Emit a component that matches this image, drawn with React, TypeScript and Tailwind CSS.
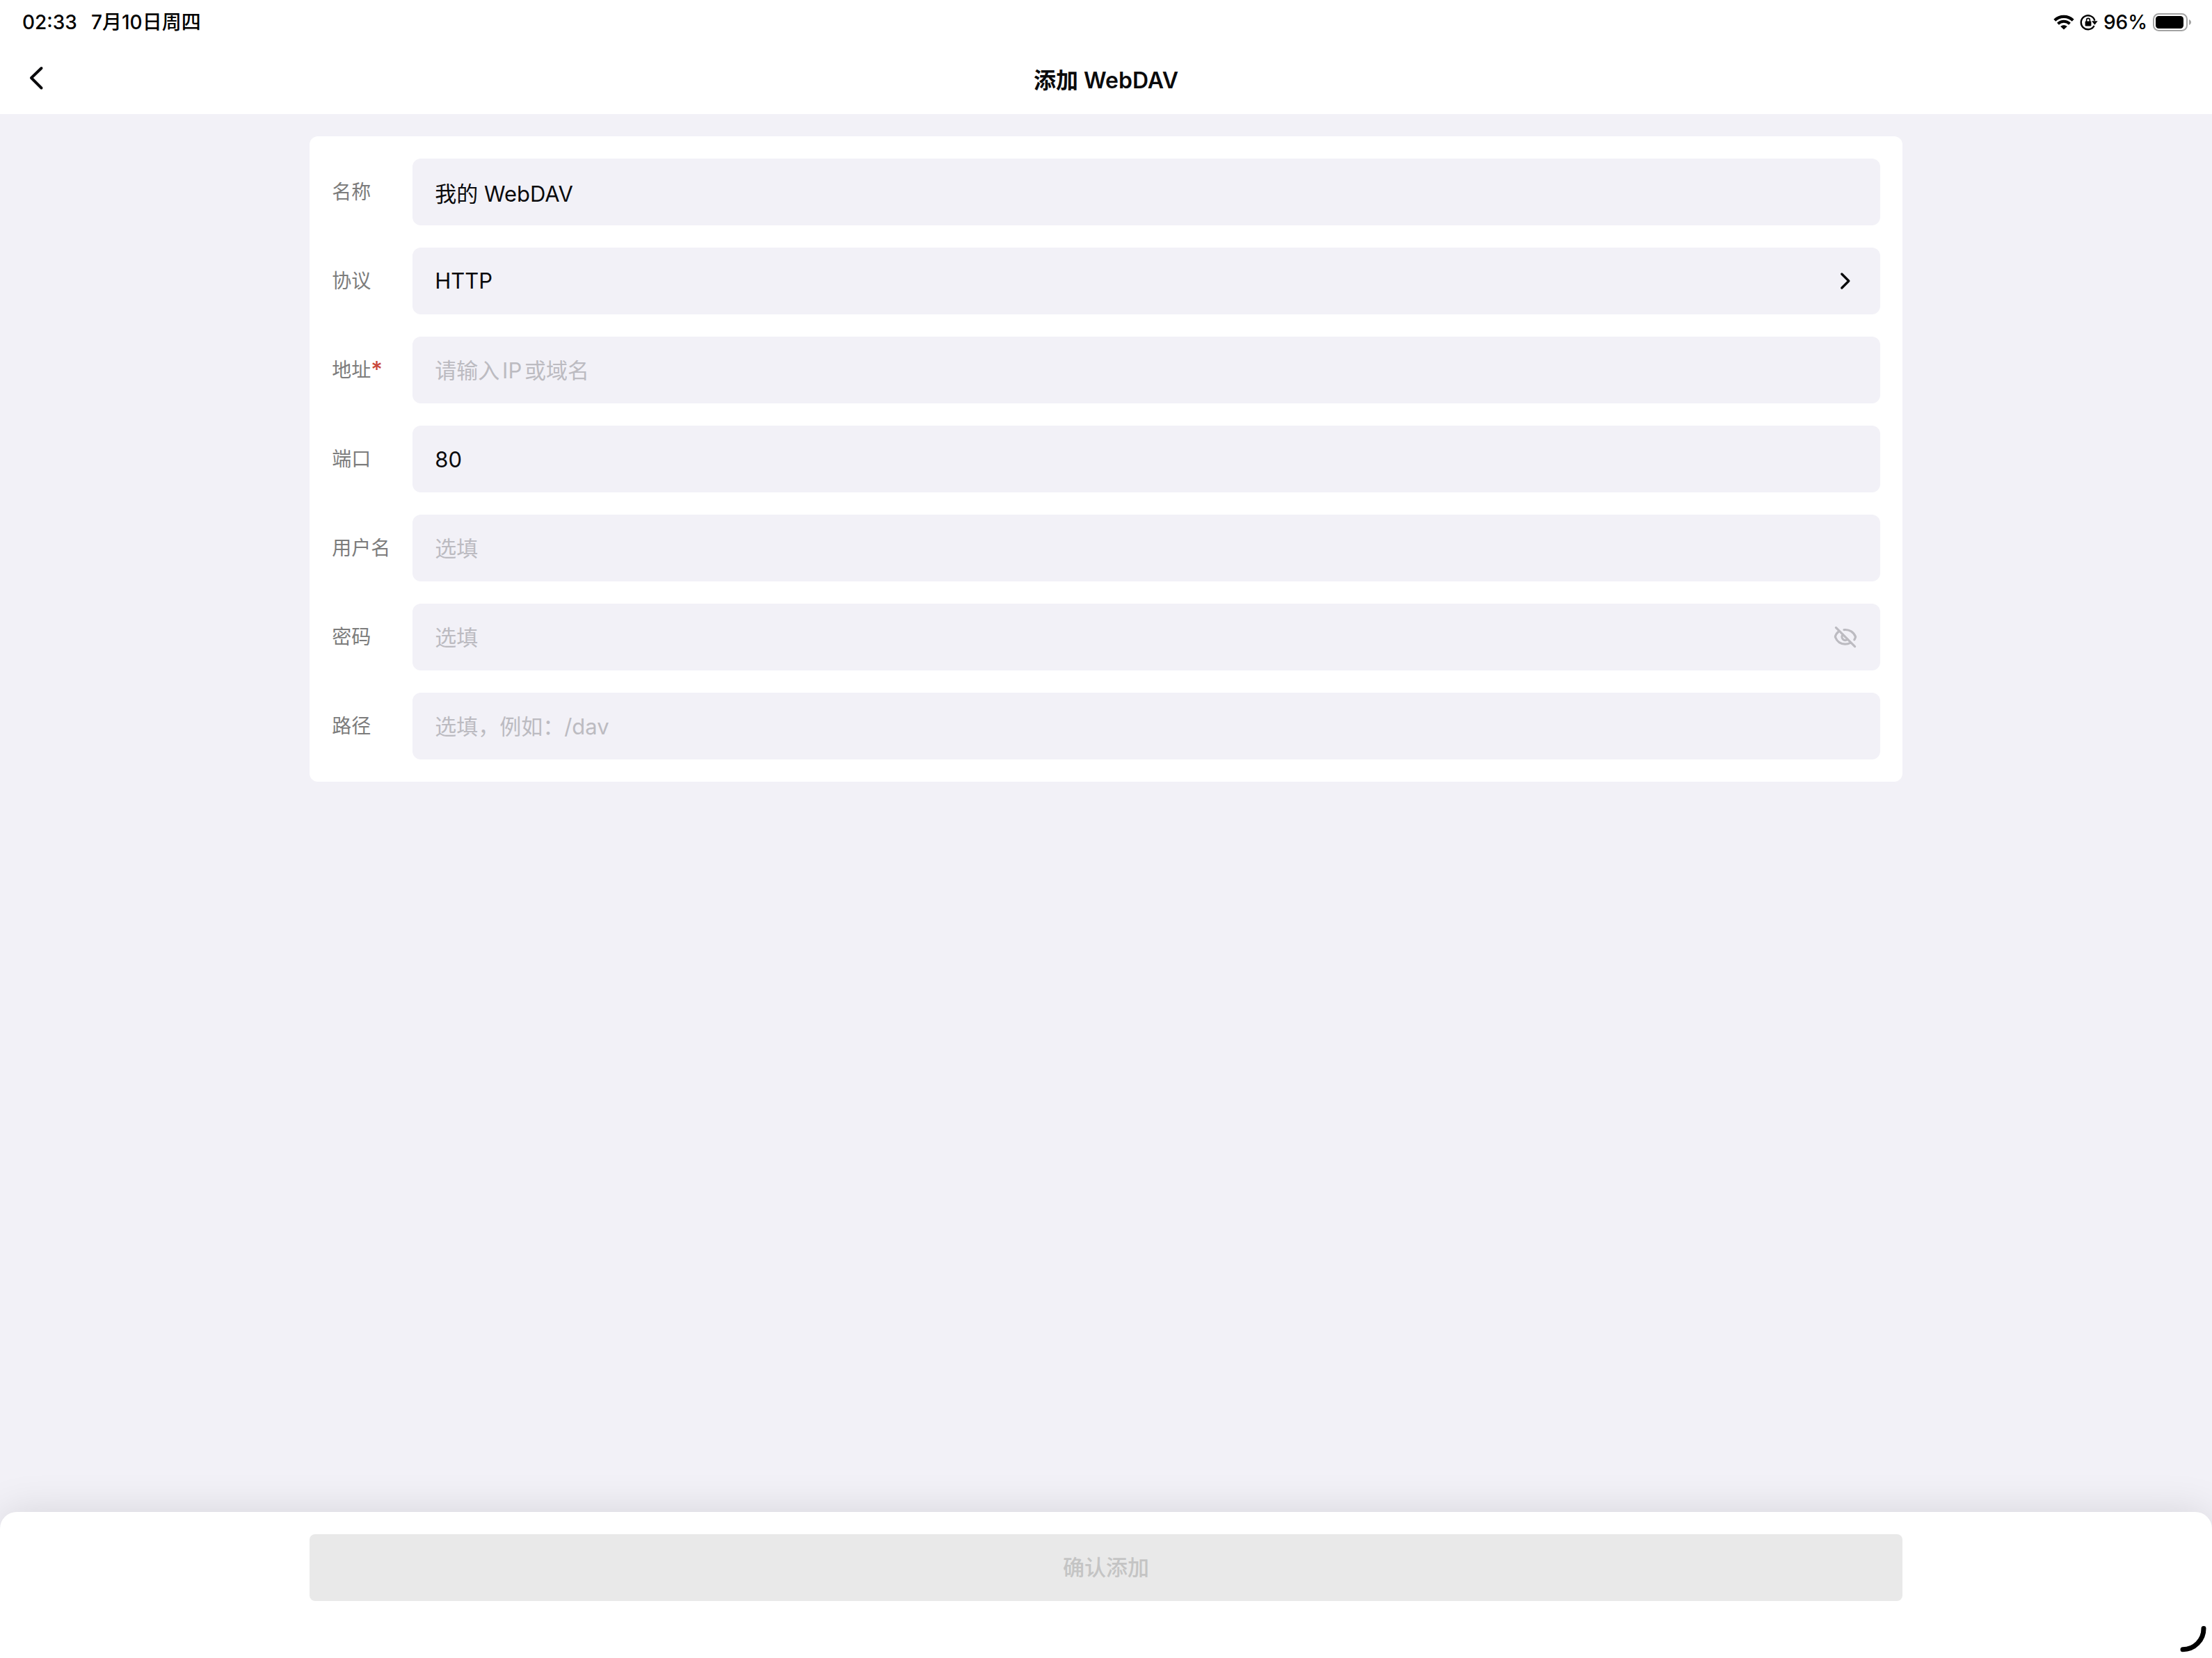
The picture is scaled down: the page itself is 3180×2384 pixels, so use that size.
import { useState } from 'react';

const FIELD =
  "h-24 w-full rounded-xl bg-[#f2f1f7] px-8 text-[31px] leading-10 text-[#0a0a0c] outline-none placeholder:text-[#bcbbc1] placeholder:opacity-100 [text-autospace:normal]";

function WifiIcon() {
  return (
    <svg width="30" height="22" viewBox="0 0 30 22" fill="none" aria-hidden="true">
      <path d="M1.8 8.2C9.2 1.2 20.8 1.2 28.200 8.2" stroke="black" strokeWidth="4.2" />
      <path d="M6.5 13.200C11.4 8.6 18.6 8.6 23.5 13.200" stroke="black" strokeWidth="4" />
      <path d="M15 21.6L10.2 17.1C13.1 14.5 16.9 14.5 19.8 17.1Z" fill="black" />
    </svg>
  );
}

function RotationLockIcon() {
  return (
    <svg width="26" height="24" viewBox="0 0 26 24" fill="none" aria-hidden="true">
      <path d="M20.6 17A10 10 0 1 1 21.4 9.6" stroke="black" strokeWidth="2.4" />
      <path d="M17 10.200H25.6L21.4 15.8Z" fill="black" />
      <rect x="7.6" y="10.4" width="8.8" height="7.2" rx="1" fill="black" />
      <path d="M9.6 11V8.8A2.4 2.4 0 0 1 14.4 8.8V11" stroke="black" strokeWidth="1.6" />
    </svg>
  );
}

function BatteryIcon() {
  return (
    <svg width="56" height="26" viewBox="0 0 56 26" fill="none" aria-hidden="true">
      <rect x="1" y="1" width="48" height="24" rx="7.5" stroke="#a3a3a3" strokeWidth="2" />
      <rect x="4" y="4" width="40" height="18" rx="4.5" fill="black" />
      <path d="M52 9C56 10.4 56 15.6 52 17Z" fill="#a3a3a3" />
    </svg>
  );
}

function EyeOffIcon() {
  return (
    <svg
      width="36"
      height="36"
      viewBox="0 0 36 36"
      fill="none"
      stroke="#bcbbc1"
      strokeWidth="3.2"
      strokeLinecap="round"
      strokeLinejoin="round"
      aria-hidden="true"
    >
      <path d="M4.4 4.4L31.6 31.6" />
      <path d="M8 10.2C5.4 12.4 3.6 15.2 3.4 18C6 24.6 11.4 28.2 17.6 28.2C20.4 28.2 22.8 27.6 25 26.4" />
      <path d="M16 7.6C24 6.8 30.2 11 32.6 17.8C32.2 19.2 31.6 20.6 30.8 21.8" />
      <path d="M14.4 14.6A4.6 4.600 0 1 0 21 21.2" />
    </svg>
  );
}

type TextRow = {
  id: string;
  label: string;
  required?: boolean;
  value?: string;
  placeholder?: string;
};

function Row({ id, label, required, children }: { id: string; label: string; required?: boolean; children: React.ReactNode }) {
  return (
    <div className="flex items-center">
      <label htmlFor={id} className="flex w-[116px] shrink-0 items-center text-[28px] leading-10 text-[#7c7c7c]">
        {label}
        {required && <span className="text-[32px] font-medium text-[#c9473a]">*</span>}
      </label>
      <div className="relative min-w-0 flex-1">{children}</div>
    </div>
  );
}

function TextField({ id, label, required, value, placeholder }: TextRow) {
  return (
    <Row id={id} label={label} required={required}>
      <input id={id} type="text" defaultValue={value} placeholder={placeholder} required={required} className={FIELD} />
    </Row>
  );
}

export default function App() {
  const [visible, setVisible] = useState(false);

  return (
    <div className="relative flex min-h-screen flex-col bg-[#f2f1f7] font-['Inter','Noto_Sans_CJK_SC',sans-serif] text-black">
      <header className="bg-white">
        <div className="flex h-16 items-center justify-between pr-[29px] pl-8 text-[28px] leading-10 font-medium">
          <div className="flex gap-5">
            <time>02:33</time>
            <span>7月10日周四</span>
          </div>
          <div className="flex items-center gap-2">
            <WifiIcon />
            <RotationLockIcon />
            <span>96%</span>
            <BatteryIcon />
          </div>
        </div>
        <div className="grid h-[100px] grid-cols-[1fr_auto_1fr] items-center px-7 pt-1">
          <button type="button" aria-label="返回" className="flex size-12 items-center justify-center">
            <svg width="48" height="48" viewBox="0 0 48 48" fill="none" aria-hidden="true">
              <path
                d="M31.5 6L17 20L31.5 34.500"
                stroke="#0a0a0c"
                strokeWidth="4"
                strokeLinecap="round"
                strokeLinejoin="round"
              />
            </svg>
          </button>
          <h1 className="text-[32px] leading-[48px] font-semibold text-[#0a0a0c]">添加 WebDAV</h1>
        </div>
      </header>

      <main className="flex-1 py-8">
        <form id="webdav" className="mx-auto flex w-[72%] flex-col gap-8 rounded-xl bg-white p-8">
          <TextField id="name" label="名称" value="我的 WebDAV" />
          <Row id="protocol" label="协议">
            <select id="protocol" defaultValue="HTTP" className={`${FIELD} appearance-none`}>
              <option>HTTP</option>
              <option>HTTPS</option>
            </select>
            <svg
              width="36"
              height="36"
              viewBox="0 0 36 36"
              fill="none"
              className="pointer-events-none absolute inset-y-0 right-8 my-auto"
              aria-hidden="true"
            >
              <path d="M12.8 8L22.8 18L12.8 28" stroke="#0a0a0c" strokeWidth="3.4" strokeLinecap="round" strokeLinejoin="round" />
            </svg>
          </Row>
          <TextField id="host" label="地址" required placeholder="请输入IP或域名" />
          <TextField id="port" label="端口" value="80" />
          <TextField id="user" label="用户名" placeholder="选填" />
          <Row id="password" label="密码">
            <input id="password" type={visible ? 'text' : 'password'} placeholder="选填" className={FIELD} />
            <button
              type="button"
              aria-label="显示密码"
              onClick={() => setVisible(!visible)}
              className="absolute inset-y-0 right-8 my-auto size-9"
            >
              <EyeOffIcon />
            </button>
          </Row>
          <TextField id="path" label="路径" placeholder="选填，例如：/dav" />
        </form>
      </main>

      <footer className="rounded-t-3xl bg-white pt-8 pb-[82px] shadow-[0_0_60px_rgba(0,0,0,0.12)]">
        <button
          type="submit"
          form="webdav"
          disabled
          className="mx-auto block h-24 w-[72%] rounded-lg bg-[#e9e9e9] text-[31px] leading-[48px] font-medium text-[#c4c4c4]"
        >
          确认添加
        </button>
      </footer>

      <svg width="40" height="40" viewBox="0 0 40 40" fill="none" className="absolute right-2 bottom-2" aria-hidden="true">
        <path d="M36 5.5A30 30 0 0 1 6 35.8" stroke="black" strokeWidth="7" strokeLinecap="round" />
      </svg>
    </div>
  );
}
